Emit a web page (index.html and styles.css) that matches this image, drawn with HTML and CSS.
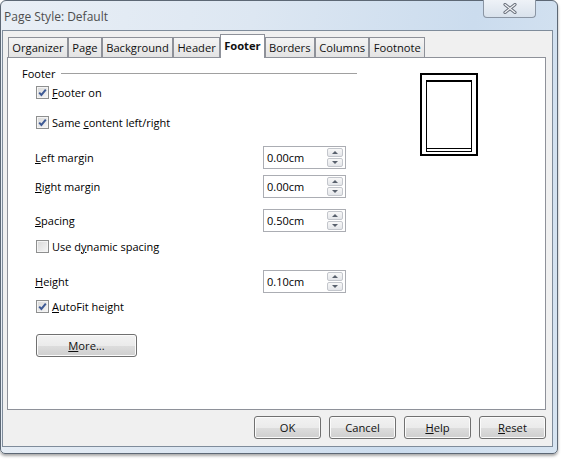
FILE: index.html
```html
<!DOCTYPE html>
<html>
<head>
<meta charset="utf-8">
<link rel="stylesheet" href="styles.css">
</head>
<body>
<div class="window">
  <div class="frame">
    <div class="titlebar"><span class="title">Page Style: Default</span></div>
    <div class="close">
      <svg width="14" height="11" viewBox="0 0 14 11">
        <path d="M2 1.5 L12 9.5 M12 1.5 L2 9.5" stroke="#6a717c" stroke-width="3.2" stroke-linecap="round" fill="none"/>
        <path d="M2 1.5 L12 9.5 M12 1.5 L2 9.5" stroke="#f4f6f9" stroke-width="1.2" stroke-linecap="round" fill="none"/>
      </svg>
    </div>
    <div class="client">
      <div class="tabs">
        <div class="tab">Organizer</div>
        <div class="tab">Page</div>
        <div class="tab">Background</div>
        <div class="tab">Header</div>
        <div class="tab active">Footer</div>
        <div class="tab">Borders</div>
        <div class="tab">Columns</div>
        <div class="tab">Footnote</div>
      </div>
      <div class="panel">
        <div class="left">
          <div class="legend"><span>Footer</span><span class="rule"></span></div>
          <div class="check r-footeron"><span class="box"><svg class="tick" width="11" height="11" viewBox="0 0 11 11"><path d="M2.2 5.6 L4.4 8 L8.8 2.6" stroke="#3e5a95" stroke-width="2" fill="none"/></svg></span><span><u>F</u>ooter on</span></div>
          <div class="check r-same"><span class="box"><svg class="tick" width="11" height="11" viewBox="0 0 11 11"><path d="M2.2 5.6 L4.4 8 L8.8 2.6" stroke="#3e5a95" stroke-width="2" fill="none"/></svg></span><span>Same <u>c</u>ontent left/right</span></div>
          <div class="field r-left"><span class="lbl"><u>L</u>eft margin</span><div class="spin"><span class="val">0.00cm</span><div class="arrows"><span class="arr up"></span><span class="arr down"></span></div></div></div>
          <div class="field r-right"><span class="lbl"><u>R</u>ight margin</span><div class="spin"><span class="val">0.00cm</span><div class="arrows"><span class="arr up"></span><span class="arr down"></span></div></div></div>
          <div class="field r-spacing"><span class="lbl"><u>S</u>pacing</span><div class="spin"><span class="val">0.50cm</span><div class="arrows"><span class="arr up"></span><span class="arr down"></span></div></div></div>
          <div class="check r-dyn"><span class="box"></span><span>Use d<u>y</u>namic spacing</span></div>
          <div class="field r-height"><span class="lbl"><u>H</u>eight</span><div class="spin"><span class="val">0.10cm</span><div class="arrows"><span class="arr up"></span><span class="arr down"></span></div></div></div>
          <div class="check r-auto"><span class="box"><svg class="tick" width="11" height="11" viewBox="0 0 11 11"><path d="M2.2 5.6 L4.4 8 L8.8 2.6" stroke="#3e5a95" stroke-width="2" fill="none"/></svg></span><span><u>A</u>utoFit height</span></div>
          <div class="btn more"><u>M</u>ore...</div>
        </div>
        <div class="preview"><div class="page"><div class="fline"></div></div></div>
      </div>
      <div class="buttons">
        <div class="btn">OK</div>
        <div class="btn">Cancel</div>
        <div class="btn"><u>H</u>elp</div>
        <div class="btn"><u>R</u>eset</div>
      </div>
    </div>
  </div>
</div>
</body>
</html>
```

FILE: styles.css
```css
html, body {
  margin: 0;
  padding: 0;
  background: #ffffff;
}
body {
  width: 561px;
  height: 459px;
  overflow: hidden;
  font-family: "Open Sans", "Noto Sans", sans-serif;
  font-size: 11px;
  color: #000;
}
u { text-decoration: underline; text-underline-offset: 1px; }

.window {
  width: 561px;
  height: 459px;
}
.frame {
  position: relative;
  box-sizing: border-box;
  width: 558px;
  height: 454px;
  border: 1px solid #5d6875;
  border-radius: 6px 6px 5px 5px;
  padding: 0 4px 5px 1px;
  background: linear-gradient(100deg, #e9eff6 0%, #dde7f2 40%, #cbdcee 75%, #d7e4f1 100%);
  box-shadow: 0 2px 3px rgba(0,0,0,0.35);
}
.titlebar {
  height: 29px;
  display: flex;
  align-items: center;
  padding-left: 2px;
}
.title {
  font-size: 12px;
  color: #4e4e4e;
  margin-top: 1px;
}
.close {
  position: absolute;
  top: -1px;
  right: 21px;
  width: 53px;
  height: 18px;
  box-sizing: border-box;
  border: 1px solid #8a95a3;
  border-top: none;
  border-radius: 0 0 4px 4px;
  background: linear-gradient(#eef2f7, #d9e2ec);
  display: flex;
  align-items: center;
  justify-content: center;
}
.client {
  box-sizing: border-box;
  height: 417px;
  border: 1px solid #7f8c9b;
  background: #f0f0f0;
  padding: 3px 6px 0 4px;
}
.tabs {
  display: flex;
  align-items: flex-end;
  height: 23px;
  padding-left: 1px;
  position: relative;
  z-index: 2;
}
.tab {
  box-sizing: border-box;
  height: 20px;
  border: 1px solid #8e9199;
  border-bottom: none;
  background: linear-gradient(#f4f4f4, #e3e3e3);
  padding: 0 3.3px;
  display: flex;
  align-items: center;
  font-size: 11.2px;
  color: #111;
}
.tab.active {
  height: 24px;
  margin-bottom: -1px;
  background: #ffffff;
  font-weight: bold;
  padding: 0 3px 3px;
}
.panel {
  box-sizing: border-box;
  height: 353px;
  border: 1px solid #8e9199;
  background: #ffffff;
  display: flex;
  padding-top: 8px;
}
.left {
  width: 335px;
  margin-left: 14px;
  display: flex;
  flex-direction: column;
}
.legend {
  display: flex;
  align-items: center;
  height: 14px;
}
.rule {
  flex: 1;
  height: 1px;
  background: #a0a0a0;
  margin-left: 5px;
  margin-top: 1px;
}
.check {
  display: flex;
  align-items: center;
  height: 16px;
  margin-left: 14px;
}
.box {
  box-sizing: border-box;
  width: 13px;
  height: 13px;
  border: 1px solid #8e8f8f;
  background: linear-gradient(135deg, #d8d8d8, #f6f6f6);
  box-shadow: inset 0 0 0 1px #f4f4f4;
  margin-right: 3px;
  display: flex;
  align-items: center;
  justify-content: center;
}
.tick { display: block; }
.field {
  display: flex;
  align-items: center;
  height: 23px;
  margin-left: 13px;
}
.lbl {
  width: 228px;
}
.spin {
  box-sizing: border-box;
  width: 83px;
  height: 23px;
  border: 1px solid #abadb3;
  background: #fff;
  display: flex;
  align-items: center;
  justify-content: space-between;
  padding: 0 2px 0 3px;
}
.arrows {
  display: flex;
  flex-direction: column;
  gap: 1px;
}
.arr {
  box-sizing: border-box;
  width: 16px;
  height: 9px;
  border: 1px solid #c3c6cc;
  border-radius: 2px;
  background: linear-gradient(#f8f8f8, #e4e6ea);
  position: relative;
}
.arr::after {
  content: "";
  position: absolute;
  left: 4px;
  width: 0;
  height: 0;
  border-left: 3px solid transparent;
  border-right: 3px solid transparent;
}
.arr.up::after {
  top: 2px;
  border-bottom: 3px solid #59616d;
}
.arr.down::after {
  top: 2px;
  border-top: 3px solid #59616d;
}

.r-footeron { margin-top: 4px; }
.r-same { margin-top: 14px; }
.r-left { margin-top: 16px; }
.r-right { margin-top: 6px; }
.r-spacing { margin-top: 11px; }
.r-dyn { margin-top: 6px; }
.r-height { margin-top: 16px; }
.r-auto { margin-top: 5px; }

.btn {
  box-sizing: border-box;
  width: 67px;
  height: 23px;
  border: 1px solid #707070;
  border-radius: 3px;
  background: linear-gradient(#f2f2f2 0%, #ebebeb 50%, #dddddd 51%, #cfcfcf 100%);
  box-shadow: inset 0 0 0 1px #fbfbfb;
  display: flex;
  align-items: center;
  justify-content: center;
  font-size: 11.2px;
  color: #111;
}
.btn.more {
  width: 101px;
  margin-top: 20px;
  margin-left: 14px;
}
.preview {
  margin-left: 63px;
  margin-top: 7px;
}
.page {
  box-sizing: border-box;
  width: 58px;
  height: 83px;
  border: 2px solid #000;
  padding: 5px 4px 2px 4px;
}
.fline {
  box-sizing: border-box;
  width: 100%;
  height: 100%;
  border: 1px solid #000;
  border-top-width: 2px;
  position: relative;
}
.fline::after {
  content: "";
  position: absolute;
  left: 0;
  right: 0;
  bottom: 2px;
  height: 1px;
  background: #000;
}
.buttons {
  display: flex;
  justify-content: flex-end;
  gap: 8px;
  margin-top: 6px;
}
```
